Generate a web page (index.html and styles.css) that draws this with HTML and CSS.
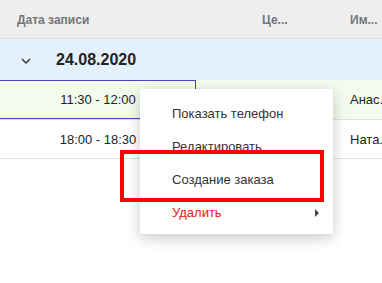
FILE: index.html
```html
<!DOCTYPE html>
<html lang="ru">
<head>
  <meta charset="UTF-8">
  <title>Записи</title>
  <link rel="stylesheet" href="styles.css">
</head>
<body>
  <div class="grid">
    <div class="row head">
      <div class="cell first">Дата записи</div>
      <div class="cell"></div>
      <div class="cell">Це...</div>
      <div class="cell">Им...</div>
    </div>
    <div class="group">
      <svg class="chevron" width="10" height="6" viewBox="0 0 10 6"><path d="M1 1 L5 5 L9 1" fill="none" stroke="#333" stroke-width="1.4"/></svg>
      <span class="date">24.08.2020</span>
    </div>
    <div class="row item selected">
      <div class="cell time focused">11:30 - 12:00</div>
      <div class="cell"></div>
      <div class="cell"></div>
      <div class="cell">Анас...</div>
    </div>
    <div class="row item">
      <div class="cell time">18:00 - 18:30</div>
      <div class="cell"></div>
      <div class="cell"></div>
      <div class="cell">Ната...</div>
    </div>
  </div>

  <ul class="menu">
    <li>Показать телефон</li>
    <li>Редактировать</li>
    <li>Создание заказа</li>
    <li class="danger">Удалить <span class="arrow"></span></li>
  </ul>
  <div class="highlight"></div>
</body>
</html>
```

FILE: styles.css
```css
html, body { margin: 0; padding: 0; }
body { font-family: "Liberation Sans", Arial, sans-serif; font-size: 13px; color: #333; background: #fff; width: 382px; height: 283px; overflow: hidden; position: relative; }
.grid { width: 382px; overflow: hidden; }
.row { display: grid; grid-template-columns: 196px 62px 88px 1fr; white-space: nowrap; }
.cell { overflow: hidden; padding-left: 4px; display: flex; align-items: center; }
.head { height: 38px; background: #eeeeee; border-bottom: 1px solid #e2e2e2; font-size: 12px; font-weight: bold; color: #777; }
.head .cell { padding-top: 2px; }
.head .first { padding-left: 17px; }
.group { height: 41px; background: #e4f0fc; display: flex; align-items: center; }
.chevron { margin-left: 21px; margin-right: 25px; margin-top: 2px; }
.date { font-size: 16px; font-weight: bold; color: #222; }
.item { height: 38px; border-bottom: 1px solid #e2e2e2; color: #222; }
.item .cell:last-child { overflow: visible; }
.selected { height: 39px; background: #f2fbec; }
.time { justify-content: center; padding-left: 0; }
.focused { position: relative; }
.focused::after { content: ""; position: absolute; left: -1px; top: 0; right: 0; bottom: 0; border: 1px solid #4a44c8; border-left: none; }
.menu { position: absolute; left: 140px; top: 89px; width: 193px; margin: 0; padding: 8px 0 5px; list-style: none; background: #fff; border-radius: 2px; box-shadow: 0 4px 14px rgba(0, 0, 0, 0.22); }
.menu li { height: 33px; line-height: 33px; padding-left: 32px; position: relative; color: #333; }
.menu .danger { color: #f01414; }
.arrow { position: absolute; right: 14px; top: 13px; width: 0; height: 0; border-top: 4px solid transparent; border-bottom: 4px solid transparent; border-left: 4px solid #444; }
.highlight { position: absolute; left: 120px; top: 150px; width: 204px; height: 52px; box-sizing: border-box; border: 4px solid #ff0000; }
```
